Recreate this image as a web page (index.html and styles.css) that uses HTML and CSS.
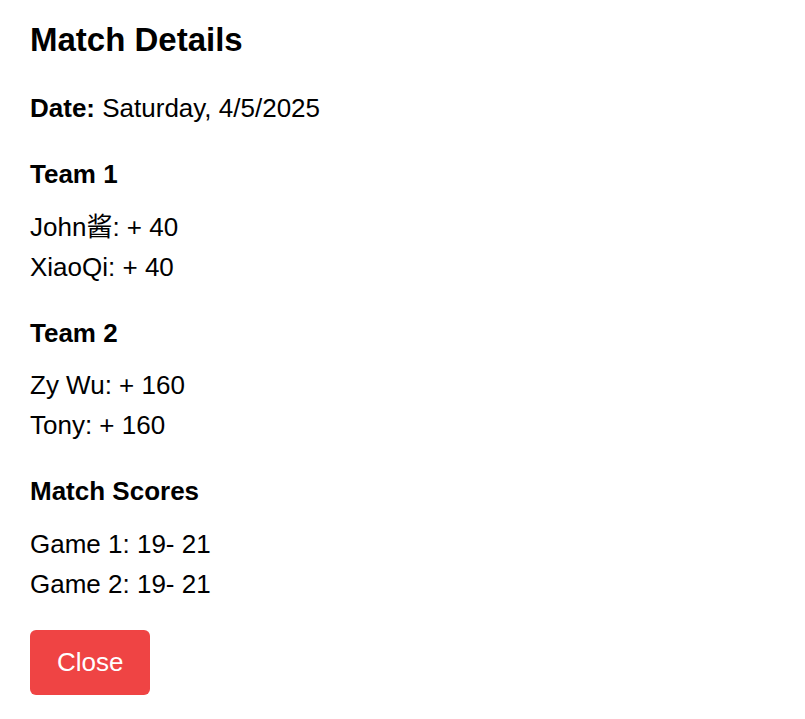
FILE: index.html
```html
<!DOCTYPE html>
<html lang="en">
<head>
<meta charset="utf-8">
<title>Match Details</title>
<link rel="stylesheet" href="styles.css">
</head>
<body>
<div class="modal">
  <h2 class="title">Match Details</h2>
  <p class="date"><strong>Date:</strong> Saturday, 4/5/2025</p>
  <section class="section">
    <h3 class="heading">Team 1</h3>
    <div class="line">John酱: + 40</div>
    <div class="line">XiaoQi: + 40</div>
  </section>
  <section class="section">
    <h3 class="heading">Team 2</h3>
    <div class="line">Zy Wu: + 160</div>
    <div class="line">Tony: + 160</div>
  </section>
  <section class="section">
    <h3 class="heading">Match Scores</h3>
    <div class="line">Game 1: 19- 21</div>
    <div class="line">Game 2: 19- 21</div>
  </section>
  <button class="close-btn" type="button">Close</button>
</div>
</body>
</html>
```
FILE: styles.css
```css
html, body {
  margin: 0;
  padding: 0;
  background: #ffffff;
}
body {
  font-family: "Liberation Sans", Arial, "Noto Sans CJK SC", sans-serif;
  color: #000000;
  font-size: 26px;
}
.modal {
  padding: 20px 30px;
  display: flex;
  flex-direction: column;
  align-items: flex-start;
}
.title {
  margin: 0 0 28px;
  font-size: 33px;
  font-weight: 700;
  line-height: 40px;
}
.date {
  margin: 0 0 26px;
  line-height: 40px;
}
.date strong {
  font-weight: 700;
}
.section {
  margin-bottom: 26px;
}
.heading {
  margin: 0 0 12.5px;
  font-size: 26px;
  font-weight: 700;
  line-height: 40px;
}
.line {
  line-height: 40px;
}
.close-btn {
  height: 65px;
  padding: 0 27px;
  border: none;
  border-radius: 6px;
  background: #ef4444;
  color: #ffffff;
  font-family: "Liberation Sans", Arial, sans-serif;
  font-size: 26px;
  cursor: pointer;
}
```
